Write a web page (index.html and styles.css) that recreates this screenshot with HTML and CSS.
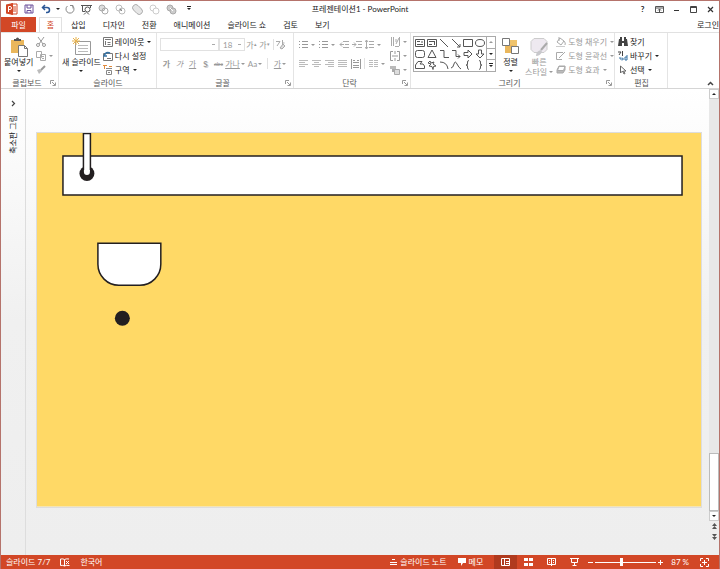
FILE: index.html
```html
<!DOCTYPE html>
<html lang="ko">

<head>
    <meta charset="UTF-8">
    <title>프레젠테이션1 - PowerPoint</title>
    <link rel="stylesheet" href="styles.css">
</head>

<body>
    <div class="window">
        <header class="titlebar">
            <div class="quick">
                <button aria-label="PowerPoint"><svg width="12" height="12"><path d="M5 1h6v10H5z" fill="#fff" stroke="#d24726"/><path d="M7 4h3M7 6h3M7 8h3" stroke="#d24726"/><path d="M0 1.500l7-1.500v12l-7-1.500z" fill="#d24726"/><path d="M2.500 9V3.500h1.500a1.500 1.500 0 0 1 0 3H2.500" fill="none" stroke="#fff"/></svg></button>
                <button aria-label="저장"><svg width="10" height="10" fill="none" stroke="#6b4f9a"><path d="M1 1h8v8H1zM3 1v3h4V1M3 9V6.500h4V9"/></svg></button>
                <button aria-label="실행 취소"><svg width="10" height="10" fill="none" stroke="#2b5797" stroke-width="1.500"><path d="M4 1L1.500 3.500 4 6M1.500 3.500H6a2.500 2.500 0 0 1 0 5H5"/></svg></button>
                <button class="drop" aria-label="실행 취소 목록"><i class="caret"></i></button>
                <button aria-label="다시 실행"><svg width="10" height="10" fill="none" stroke="#888"><path d="M7.500 2A4 4 0 1 1 2.500 2M5 1.500h3v3"/></svg></button>
                <button aria-label="슬라이드 쇼 시작"><svg width="11" height="11" fill="none" stroke="#555"><path d="M0 1.500h11M1.500 2v5.500H4M9.500 2v2M3 10.500l2-2M8 10.500l-2-2"/><circle cx="6.500" cy="5.500" r="2.500"/></svg></button>
                <button aria-label="도형 병합"><svg width="11" height="11" fill="#ddd" stroke="#aaa"><circle cx="4" cy="4" r="3"/><circle cx="7" cy="7" r="3" fill="none"/></svg></button>
                <button aria-label="도형 결합"><svg width="11" height="11" fill="none" stroke="#bbb"><circle cx="4" cy="4" r="3"/><circle cx="7" cy="7" r="3"/><path d="M5 5l2 2" stroke="#888"/></svg></button>
                <button aria-label="도형 통합"><svg width="11" height="11" fill="#e6e6e6" stroke="#aaa"><path d="M1.500 6A3 3 0 0 1 6 1.500L9.500 5A3 3 0 0 1 5 9.500z"/></svg></button>
                <button aria-label="도형 빼기"><svg width="11" height="11" fill="none" stroke="#ccc"><circle cx="4" cy="4" r="3"/><circle cx="7" cy="7" r="3" fill="#fff"/></svg></button>
                <button aria-label="도형 교차"><svg width="11" height="11" fill="#ccc" stroke="#aaa"><circle cx="4" cy="4" r="3"/><circle cx="7" cy="7" r="3"/><path d="M4 4l3 3" stroke="#fff"/></svg></button>
                <button aria-label="빠른 실행 도구 모음 사용자 지정"><i class="caret bar"></i></button>
            </div>
            <h1>프레젠테이션1 - PowerPoint</h1>
            <div class="controls">
                <button aria-label="도움말"><b>?</b></button>
                <button aria-label="리본 메뉴 표시 옵션"><svg width="9" height="7" fill="none" stroke="#555"><path d="M.5.5h8v6h-8zM.5 2h8M4.500 6V3M3 4.500L4.500 3 6 4.500"/></svg></button>
                <button aria-label="최소화"><svg width="7" height="7"><path d="M1 4h5v1H1z" fill="#333"/></svg></button>
                <button aria-label="최대화"><svg width="7" height="7"><path d="M.5.5h6v6h-6zM0 1.500h7" fill="none" stroke="#444"/></svg></button>
                <button aria-label="닫기"><svg width="7" height="7"><path d="M1 1l5 5M6 1L1 6" stroke="#333" stroke-width="1.200"/></svg></button>
            </div>
        </header>

        <nav class="tabs">
            <button class="file">파일</button>
            <button class="active">홈</button>
            <div class="others">
                <button>삽입</button>
                <button>디자인</button>
                <button>전환</button>
                <button>애니메이션</button>
                <button>슬라이드 쇼</button>
                <button>검토</button>
                <button>보기</button>
            </div>
            <a class="login" href="#">로그인</a>
        </nav>

        <section class="ribbon">
            <div class="group clipboard">
                <div class="tools">
                    <button class="big"><svg width="18" height="20"><path d="M1 3h13v13H1z" fill="#eab75c"/><path d="M4 4V2h2a1.500 1.500 0 0 1 3 0h2v2z" fill="#555"/><path d="M8.500 8.500h6l3 3v8h-9z" fill="#fff" stroke="#777"/><path d="M14.500 8.500v3h3" fill="none" stroke="#777"/></svg><span>붙여넣기</span><i class="caret"></i></button>
                    <div class="stack">
                        <button class="off" aria-label="잘라내기"><svg width="10" height="10" fill="none" stroke="#999"><path d="M2 0l5 7M8 0L3 7"/><circle cx="2" cy="8" r="1.500"/><circle cx="8" cy="8" r="1.500"/></svg></button>
                        <button class="off" aria-label="복사"><svg width="10" height="10" fill="#fff" stroke="#aaa"><path d="M.5.5h5v6h-5zM4.500 3.500h5v6h-5zM6 5.500h2M6 7.500h2"/></svg><i class="caret"></i></button>
                        <button class="off" aria-label="서식 복사"><svg width="10" height="10"><path d="M1 5l3-1 2 2-3 3z" fill="#bbb"/><path d="M5 5l4-4" stroke="#999" stroke-width="2"/></svg></button>
                    </div>
                </div>
                <footer><h2>클립보드</h2><button aria-label="클립보드 옵션"><svg class="launch"><use href="#launch"/></svg></button></footer>
            </div>

            <div class="group slides">
                <div class="tools">
                    <button class="big"><svg width="19" height="20" fill="none" stroke="#999"><path d="M3.500 4.500h15v13h-15z" fill="#fff"/><path d="M6 8.500h10M6 11.500h10M6 14.500h10" stroke="#bbb"/><path d="M4 0v8M0 4h8M1 1l6 6M7 1L1 7" stroke="#e9b34d"/></svg><span>새 슬라이드</span><i class="caret"></i></button>
                    <div class="stack">
                        <button><svg width="10" height="10" fill="none" stroke="#777"><path d="M.5.500h9v9h-9zM2 2.500h6M2.500 4v4M4.500 5.500h3M4.500 7.500h3"/></svg>레이아웃<i class="caret"></i></button>
                        <button><svg width="10" height="10" fill="none" stroke="#777"><path d="M.5 2.500h9v7h-9zM4 7.500h4"/><path d="M2 3l-1 2 3 0M1 5Q3 0 7 2" stroke="#3672a4" stroke-width="1.500"/></svg>다시 설정</button>
                        <button><svg width="10" height="10" fill="none" stroke="#888"><path d="M3 3.500h6M3.500 5.500h5v4h-5zM5 7.500h2"/><path d="M0 .5h4M1.500 0v4M6 1.500h3" stroke="#e08a3c"/></svg>구역<i class="caret"></i></button>
                    </div>
                </div>
                <footer><h2>슬라이드</h2></footer>
            </div>

            <div class="group font">
                <div class="tools rows">
                    <div class="row">
                        <select class="family" aria-label="글꼴" disabled><option></option></select>
                        <select class="size" aria-label="글꼴 크기" disabled><option>18</option></select>
                        <button class="off letter" aria-label="크게">가<sup>▴</sup></button>
                        <button class="off letter" aria-label="작게">가<sup>▾</sup></button>
                        <i class="rule"></i>
                        <button class="off" aria-label="서식 지우기"><svg width="10" height="10" fill="none" stroke="#aaa"><path d="M0 1.500h4L1 6M6.500 0v6M6.500 3h2"/><path d="M4 8l3-4 2 2-3 3z" fill="#ddd"/></svg></button>
                    </div>
                    <div class="row">
                        <button class="off letter"><b>가</b></button>
                        <button class="off letter"><em>가</em></button>
                        <button class="off letter"><u>가</u></button>
                        <button class="off letter shadow"><b>S</b></button>
                        <button class="off letter tiny"><s>abc</s></button>
                        <button class="off letter wide"><u>가나</u><i class="caret"></i></button>
                        <button class="off letter wide">Aa<i class="caret"></i></button>
                        <i class="rule"></i>
                        <button class="off letter wide"><u>가</u><i class="caret"></i></button>
                    </div>
                </div>
                <footer class="off"><h2>글꼴</h2><button aria-label="글꼴 옵션"><svg class="launch"><use href="#launch"/></svg></button></footer>
            </div>

            <div class="group paragraph">
                <div class="tools">
                    <div class="rows">
                        <div class="row">
                            <button class="off mid" aria-label="글머리 기호"><svg width="9" height="9"><use href="#list"/></svg><i class="caret"></i></button>
                            <button class="off mid" aria-label="번호 매기기"><svg width="9" height="9"><use href="#list"/></svg><i class="caret"></i></button>
                            <button class="off letter" aria-label="목록 수준 줄임"><svg width="10" height="9" fill="none" stroke="#aaa"><path d="M4 1.500h6M6 4.500h4M4 7.500h6M3 2.500L1 4.500l2 2M1 4.500h4"/></svg></button>
                            <button class="off letter" aria-label="목록 수준 늘림"><svg width="10" height="9" fill="none" stroke="#aaa"><path d="M4 1.500h6M6 4.500h4M4 7.500h6M2 2.500l2 2-2 2M0 4.500h4"/></svg></button>
                            <button class="off mid" aria-label="줄 간격"><svg width="9" height="9" fill="none" stroke="#aaa"><path d="M4 1.500h5M4 4.500h5M4 7.500h5M1.500 0v9M0 2l1.500-2L3 2M0 7l1.500 2L3 7"/></svg><i class="caret"></i></button>
                        </div>
                        <div class="row">
                            <button class="off letter" aria-label="왼쪽 맞춤"><svg width="9" height="9" stroke="#bbb"><path d="M0 1.500h9M0 3.500h6M0 5.500h9M0 7.500h6"/></svg></button>
                            <button class="off letter" aria-label="가운데 맞춤"><svg width="9" height="9" stroke="#bbb"><path d="M0 1.500h9M2 3.500h5M0 5.500h9M2 7.500h5"/></svg></button>
                            <button class="off letter" aria-label="오른쪽 맞춤"><svg width="9" height="9" stroke="#bbb"><path d="M0 1.500h9M3 3.500h6M0 5.500h9M3 7.500h6"/></svg></button>
                            <button class="off letter" aria-label="양쪽 맞춤"><svg width="9" height="9" stroke="#bbb"><path d="M0 1.500h9M0 3.500h9M0 5.500h9M0 7.500h9"/></svg></button>
                            <button class="off letter" aria-label="균등 분할"><svg width="10" height="10" fill="none" stroke="#999"><path d="M.5 0v10M9.500 0v10M2 1.500h2M6 1.500h2M2 3.500h6M2 6.500h6M2 8.500h6"/></svg></button>
                            <i class="rule"></i>
                            <button class="off mid" aria-label="단"><svg width="9" height="9" stroke="#bbb"><path d="M0 1.500h4M5 1.500h4M0 3.500h4M5 3.500h4M0 5.500h4M5 5.500h4M0 7.500h4M5 7.500h4"/></svg><i class="caret"></i></button>
                        </div>
                    </div>
                    <div class="stack">
                        <button class="off" aria-label="텍스트 방향"><svg width="10" height="10" fill="none" stroke="#aaa"><path d="M1.500 0v9M3.500 0v9M5 9.500h4M9.500 9V0M6 7l3-6M6 2v3"/></svg><i class="caret"></i></button>
                        <button class="off" aria-label="텍스트 맞춤"><svg width="10" height="10" fill="none" stroke="#999"><path d="M3 .5H.5v9H3M7 .5h2.500v9H7M5 0v3M5 7v3M2 5h6"/></svg><i class="caret"></i></button>
                        <button class="off" aria-label="SmartArt로 변환"><svg width="10" height="10"><path d="M0 1h6v3H0z" fill="#bbb"/><path d="M2 4h6v3H2z" fill="#aaa"/><path d="M4.500 4.500h5v5h-5z" fill="#ddd" stroke="#aaa"/></svg><i class="caret"></i></button>
                    </div>
                </div>
                <footer class="off"><h2>단락</h2><button aria-label="단락 옵션"><svg class="launch"><use href="#launch"/></svg></button></footer>
            </div>

            <div class="group drawing">
                <div class="tools">
                    <div class="gallery">
                        <div class="shapes">
                            <button aria-label="텍스트 상자"><svg><path d="M.5 1.500h9v7h-9zM2 3.500h3M2 6.500h6M7 3v2"/></svg></button>
                            <button aria-label="세로 텍스트 상자"><svg><path d="M.5 1.500h9v7h-9zM2 3.500h5M2 6.500h3M7.500 3v4"/></svg></button>
                            <button aria-label="선"><svg><path d="M1 1l8 8"/></svg></button>
                            <button aria-label="화살표"><svg><path d="M1 1l8 8M9 6v3H6"/></svg></button>
                            <button aria-label="직사각형"><svg><path d="M.5 1.500h9v7h-9z"/></svg></button>
                            <button aria-label="타원"><svg><ellipse cx="5" cy="5" rx="4.500" ry="3.500"/></svg></button>
                            <button aria-label="둥근 직사각형"><svg><rect x=".5" y="1.500" width="9" height="7" rx="2"/></svg></button>
                            <button aria-label="삼각형"><svg><path d="M5 1l4 7.500H1z"/></svg></button>
                            <button aria-label="꺾인 연결선"><svg><path d="M1 1.500h4v7h5"/></svg></button>
                            <button aria-label="꺾인 화살표"><svg><path d="M1 1.500h4v6h4M7 5.500l2 2-2 2"/></svg></button>
                            <button aria-label="오른쪽 화살표"><svg><path d="M1 3.500h4V1l4 4-4 4V6.500H1z"/></svg></button>
                            <button aria-label="아래쪽 화살표"><svg><path d="M3.500 1h3v4H9L5 9 1 5h2.500z"/></svg></button>
                            <button aria-label="자유형"><svg><path d="M3 1.500h4L5 4h3l1.500 2v2.500h-9V5z"/></svg></button>
                            <button aria-label="번개"><svg><path d="M3 1L1 3l3 1-2 2 3 .5L6 9.500l.5-3L9 6 6 4l1-2-3 1z"/></svg></button>
                            <button aria-label="호"><svg><path d="M1 2Q8 2 9 9"/></svg></button>
                            <button aria-label="곡선"><svg><path d="M0 8Q2 8 3 4t3 0 4 5"/></svg></button>
                            <button aria-label="왼쪽 중괄호"><svg><path d="M6 .5Q4 .5 4.500 3T3 5q2 0 1.500 2T6 9.500"/></svg></button>
                            <button aria-label="오른쪽 중괄호"><svg><path d="M4 .5q2 0 1.500 2.500T7 5Q5 5 5.500 7T4 9.500"/></svg></button>
                        </div>
                        <div class="spin">
                            <button class="off" aria-label="위로"><i class="caret up"></i></button>
                            <button aria-label="아래로"><i class="caret"></i></button>
                            <button aria-label="자세히"><i class="caret bar"></i></button>
                        </div>
                    </div>
                    <button class="big"><svg width="18" height="20"><path d="M6 3h9v6H6z" fill="#f0c36b"/><path d="M3 8h8v8H3z" fill="#eab75c"/><path d="M.5 1.500h7v7h-7zM9.500 9.500h7v7h-7z" fill="#fff" stroke="#777"/></svg><span>정렬</span><i class="caret"></i></button>
                    <button class="big off style"><svg width="18" height="20"><path d="M4 1.500h10l3 3v8l-3 3H4l-3-3v-8z" fill="#eee9f0" stroke="#ccc"/><path d="M17 6l-6 7" stroke="#aaa" stroke-width="2"/><path d="M6 19q0-5 5-6l1 2q-2 4-6 4z" fill="#c8c8cc"/></svg><span>빠른</span><span class="more">스타일<i class="caret"></i></span></button>
                    <div class="stack">
                        <button class="off"><svg width="10" height="10" fill="none" stroke="#aaa"><path d="M4 1L1 5l4 3 3-4zM3 0v4M8 4q2 2 1 4"/><path d="M0 9.500h9" stroke="#ccc"/></svg>도형 채우기<i class="caret"></i></button>
                        <button class="off"><svg width="10" height="10" fill="none" stroke="#aaa"><path d="M7 1.500H.5v7H6M3 7l6-6"/></svg>도형 윤곽선<i class="caret"></i></button>
                        <button class="off"><svg width="10" height="10" fill="#fff" stroke="#aaa"><path d="M1 5l2-4h6v4L7 8H1z" fill="#bbb"/><path d="M3 1.500h6L7.500 5.500h-6z"/></svg>도형 효과<i class="caret"></i></button>
                    </div>
                </div>
                <footer class="off"><h2>그리기</h2><button aria-label="그리기 옵션"><svg class="launch"><use href="#launch"/></svg></button></footer>
            </div>

            <div class="group editing">
                <div class="tools">
                    <div class="stack">
                        <button><svg width="10" height="10" fill="#444"><path d="M1 2h3v2h2V2h3l1 7H6V6H4v3H0zM2 0h2v2H2zM6 0h2v2H6z"/></svg>찾기</button>
                        <button><svg width="10" height="10" fill="none" stroke="#444"><path d="M0 1h3L1 4M4.500 0v5"/><path d="M2 6v2h3M4 6.500L5.500 8 4 9.500M9 4v5H7V6h2" stroke="#3672a4"/></svg>바꾸기<i class="caret"></i></button>
                        <button><svg width="10" height="10" fill="#fff" stroke="#666"><path d="M2.500 1v7l2-2 1.500 3 1-.5L5.500 6H8z"/></svg>선택<i class="caret"></i></button>
                    </div>
                </div>
                <footer><h2>편집</h2></footer>
            </div>
            <button class="collapse" aria-label="리본 메뉴 축소"><svg width="7" height="5"><path d="M1 4l2.500-2.500L6 4" fill="none" stroke="#444" stroke-width="1.500"/></svg></button>
        </section>

        <main class="workspace">
            <aside class="thumbs">
                <button aria-label="축소판 그림 펼치기"><svg width="5" height="7"><path d="M1 1l2.500 2.500L1 6" fill="none" stroke="#444" stroke-width="1.200"/></svg></button>
                <span>축소판 그림</span>
            </aside>
            <div class="stage">
                <svg class="slide" viewBox="0 0 665 374" role="img" aria-label="슬라이드 7">
                    <rect width="665" height="374" fill="#ffd966"/>
                    <g fill="#fff" stroke="#231f20" stroke-width="1.500">
                        <path d="M26 23h620v39H26z"/>
                        <circle cx="50" cy="40.500" r="7.500" fill="#231f20" stroke="none"/>
                        <path d="M46.500 38V.5h7V38"/>
                        <path d="M47 37h6v2a3 3 0 0 1-6 0z" stroke="none"/>
                        <path d="M61 110.500h63v21a21 21 0 0 1-21 21H82a21 21 0 0 1-21-21z"/>
                        <circle cx="85.500" cy="185.500" r="7.500" fill="#231f20" stroke="none"/>
                    </g>
                </svg>
            </div>
            <div class="scroll">
                <button aria-label="위로 스크롤"><i class="caret up"></i></button>
                <div class="track"><div class="thumb"></div></div>
                <button aria-label="아래로 스크롤"><i class="caret"></i></button>
                <button class="page" aria-label="이전 슬라이드"><svg width="5" height="7"><path d="M0 3l2.500-3L5 3zM0 6l2.500-3L5 6z" fill="#555"/></svg></button>
                <button class="page" aria-label="다음 슬라이드"><svg width="5" height="7"><path d="M0 1l2.500 3L5 1zM0 4l2.500 3L5 4z" fill="#555"/></svg></button>
            </div>
        </main>

        <footer class="status">
            <span>슬라이드 7/7</span>
            <button aria-label="맞춤법 검사"><svg width="10" height="9" fill="none" stroke="#fff"><path d="M4.500 1.500Q3 .5.500 1v6.500q2.500-.5 4 .5 1-1 5-.5M4.500 1.500V8M4.500 1.500Q6 .5 9 1M6 3l3 3M9 3L6 6"/></svg></button>
            <span>한국어</span>
            <div class="views">
                <button class="note"><svg width="7" height="8" stroke="#fff"><path d="M2 1.500h3M0 4.500h7M0 6.500h7"/></svg>슬라이드 노트</button>
                <button class="note memo"><svg width="8" height="8" fill="#fff"><path d="M0 0h8v5H5L3 8V5H0z"/></svg>메모</button>
                <button class="view on" aria-label="기본"><svg width="9" height="8" fill="none" stroke="#fff"><path d="M.5.500h8v7h-8zM3.500 0v8M5 3.500h3M5 5.500h3"/></svg></button>
                <button class="view" aria-label="여러 슬라이드"><svg width="9" height="8" fill="#fff"><path d="M0 0h4v3H0zM5 0h4v3H5zM0 5h4v3H0zM5 5h4v3H5z"/></svg></button>
                <button class="view" aria-label="읽기용 보기"><svg width="9" height="8" fill="none" stroke="#fff"><path d="M.5.500h8v6h-8zM4.500 0v8M2 2.500h1M6 2.500h1M2 4.500h1M6 4.500h1"/></svg></button>
                <button class="view" aria-label="슬라이드 쇼"><svg width="9" height="8" fill="none" stroke="#fff"><path d="M0 .5h9M1.500 1v3.500h6V1M4.500 5v3M2.500 7.500h4"/></svg></button>
                <div class="zoom">
                    <button aria-label="축소"><svg width="5" height="5"><path d="M0 2.500h5" stroke="#fff"/></svg></button>
                    <input type="range" min="10" max="190" value="87" aria-label="확대/축소">
                    <button aria-label="확대"><svg width="5" height="5"><path d="M0 2.500h5M2.500 0v5" stroke="#fff"/></svg></button>
                </div>
                <span class="percent">87 %</span>
                <button aria-label="창에 맞춤"><svg width="9" height="9" fill="none" stroke="#fff"><path d="M.5 3V.5H3M6 .5h2.500V3M8.500 6v2.500H6M3 8.500H.5V6M2 4.500h5M4.500 2v5"/></svg></button>
            </div>
        </footer>
    </div>

    <svg class="defs">
        <symbol id="launch" viewBox="0 0 6 6"><path d="M.5 4V.5H4M2 2l3 3M5.500 2.500v3h-3" fill="none" stroke="currentColor"/></symbol>
        <symbol id="list" viewBox="0 0 9 9"><path d="M0 1.500h1M0 4.500h1M0 7.500h1M3 1.500h6M3 4.500h6M3 7.500h6" stroke="#999"/></symbol>
    </svg>
</body>

</html>
```
FILE: styles.css
```css
* {
    box-sizing: border-box;
    margin: 0;
    padding: 0;
}

body {
    font: 8px/10px Lato, "Noto Sans CJK KR", sans-serif;
    color: #222;
}

button {
    display: flex;
    align-items: center;
    justify-content: center;
    border: 0;
    background: none;
    font: inherit;
    color: inherit;
    white-space: nowrap;
}

svg {
    display: block;
    flex: none;
}

h1,
h2 {
    font-size: 8px;
    font-weight: normal;
}

.defs {
    display: none;
}

.window {
    display: flex;
    flex-direction: column;
    height: 100vh;
    border: 1px solid #b5736b;
    border-bottom: 0;
    background: #fff;
    overflow: hidden;
}

.off {
    color: #999;
}

.caret {
    display: inline-block;
    flex: none;
    border: 2px solid transparent;
    border-top-color: currentColor;
    border-bottom: 0;
}

.caret.up {
    border-top: 0;
    border-bottom: 2px solid currentColor;
}

.caret.bar {
    position: relative;
}

.caret.bar::before {
    content: "";
    position: absolute;
    left: -2px;
    top: -4px;
    width: 4px;
    height: 1px;
    background: currentColor;
}

/* title bar */

.titlebar {
    display: grid;
    grid-template-columns: 1fr auto 1fr;
    align-items: center;
    height: 16px;
}

.quick {
    display: flex;
    padding-left: 2px;
}

.quick button,
.controls button {
    width: 17px;
    height: 16px;
}

.quick .drop {
    width: 7px;
}

.controls {
    display: flex;
    justify-content: flex-end;
}

/* tabs */

.tabs {
    display: flex;
    align-items: stretch;
    height: 15px;
}

.tabs .file {
    width: 35px;
    background: #d24726;
    color: #fff;
}

.tabs .active {
    width: 23px;
    margin-left: 3px;
    border: 1px solid #e1e1e1;
    border-bottom: 0;
    color: #d24726;
}

.others {
    display: flex;
    gap: 17px;
    padding-left: 9px;
}

.login {
    align-self: center;
    margin-left: auto;
    color: inherit;
    text-decoration: none;
}

/* ribbon */

.ribbon {
    display: flex;
    height: 57px;
    border-top: 1px solid #e1e1e1;
    border-bottom: 1px solid #d5d5d5;
}

.group {
    display: flex;
    flex-direction: column;
    justify-content: space-between;
    padding: 2px 0 0 3px;
    border-right: 1px solid #e4e4e4;
}

.clipboard {
    width: 58px;
}

.slides {
    width: 98px;
}

.font {
    width: 137px;
}

.paragraph {
    width: 117px;
}

.drawing {
    width: 204px;
    padding-left: 2px;
}

.editing {
    width: 53px;
}

.group footer {
    display: flex;
    align-items: center;
    height: 11px;
    padding-right: 2px;
}

.group h2 {
    flex: 1;
    text-align: center;
    color: #555;
}

.launch {
    width: 6px;
    height: 6px;
    color: #999;
}

.tools {
    display: flex;
    gap: 3px;
}

.big {
    flex-direction: column;
    justify-content: flex-start;
    padding-top: 2px;
    height: 42px;
}

.big .caret {
    margin-top: 3px;
}

.big .more {
    display: flex;
    align-items: center;
    gap: 2px;
}

.big .more .caret {
    margin-top: 0;
}

.stack {
    display: flex;
    flex-direction: column;
    align-items: flex-start;
}

.stack button {
    height: 14px;
    gap: 2px;
}

.stack .caret {
    margin-left: 1px;
}

.slides .tools {
    gap: 2px;
}

.rows {
    display: flex;
    flex-direction: column;
    gap: 4px;
    padding-top: 2px;
}

.row {
    display: flex;
    align-items: center;
    height: 15px;
}

.rule {
    width: 1px;
    height: 11px;
    margin: 0 2px;
    background: #e1e1e1;
}

.letter {
    width: 13px;
}

.letter sup {
    font-size: 5px;
    line-height: 5px;
}

.shadow {
    text-shadow: 1px 1px #ccc;
}

.tiny {
    font-size: 6px;
}

.wide,
.mid {
    width: 20px;
    gap: 3px;
}

.wide {
    gap: 1px;
}

select {
    height: 13px;
    border: 1px solid #e1e1e1;
    background: #fff linear-gradient(#aaa, #aaa) no-repeat right 3px center / 3px 1px;
    color: #999;
    font: inherit;
    appearance: none;
    opacity: 1;
}

.family {
    width: 59px;
}

.size {
    width: 26px;
    padding-left: 3px;
}

.gallery {
    display: flex;
    height: 36px;
    margin-top: 1px;
    border: 1px solid #aaa;
}

.shapes {
    display: grid;
    grid-template-columns: repeat(6, 12px);
}

.shapes svg {
    width: 10px;
    height: 10px;
    fill: none;
    stroke: #555;
    stroke-width: 1px;
}

.spin {
    display: grid;
    width: 9px;
    border-left: 1px solid #aaa;
}

.spin button + button {
    border-top: 1px solid #aaa;
}

.drawing .big {
    width: 25px;
}

.drawing .style {
    width: 28px;
}

.collapse {
    margin: auto 5px 2px auto;
}

/* slide area */

.workspace {
    flex: 1;
    display: flex;
    min-height: 0;
    background: linear-gradient(#fff, #f0f0f0 50%, #eee);
}

.thumbs {
    display: flex;
    flex-direction: column;
    align-items: center;
    gap: 8px;
    width: 25px;
    padding-top: 11px;
    border-right: 1px solid #ddd;
}

.thumbs span {
    writing-mode: vertical-rl;
    text-orientation: sideways;
    transform: rotate(180deg);
}

.stage {
    flex: 1;
    display: flex;
    align-items: center;
    padding: 0 8px 4px 11px;
}

.slide {
    flex: 1;
    width: 100%;
    outline: 1px solid #ddd;
    outline-offset: 0;
}

.scroll {
    display: flex;
    flex-direction: column;
    width: 10px;
    padding-bottom: 14px;
}

.scroll button {
    height: 10px;
    border: 1px solid #ccc;
    background: #fff;
}

.scroll .page {
    border: 0;
    background: none;
}

.track {
    flex: 1;
    display: flex;
    flex-direction: column;
    justify-content: flex-end;
    background: #e8e8e8;
}

.thumb {
    height: 14%;
    border: 1px solid #bbb;
    background: #fff;
}

/* status bar */

.status {
    display: flex;
    align-items: center;
    gap: 10px;
    height: 14px;
    margin: 0 -1px;
    padding: 0 11px 0 6px;
    background: #d24726;
    color: #fff;
}

.views {
    display: flex;
    align-items: center;
    margin-left: auto;
}

.note {
    gap: 3px;
}

.memo {
    margin: 0 11px;
}

.view {
    width: 23px;
    height: 14px;
}

.view.on {
    background: #b03a1e;
}

.zoom {
    display: flex;
    align-items: center;
    gap: 2px;
    margin: 0 8px 0 2px;
}

.zoom input {
    width: 61px;
    height: 10px;
    background: linear-gradient(#fff, #fff) no-repeat center / 100% 1px;
    appearance: none;
}

.zoom input::-webkit-slider-thumb {
    width: 3px;
    height: 8px;
    background: #fff;
    appearance: none;
}

.percent {
    margin-right: 11px;
}
```
